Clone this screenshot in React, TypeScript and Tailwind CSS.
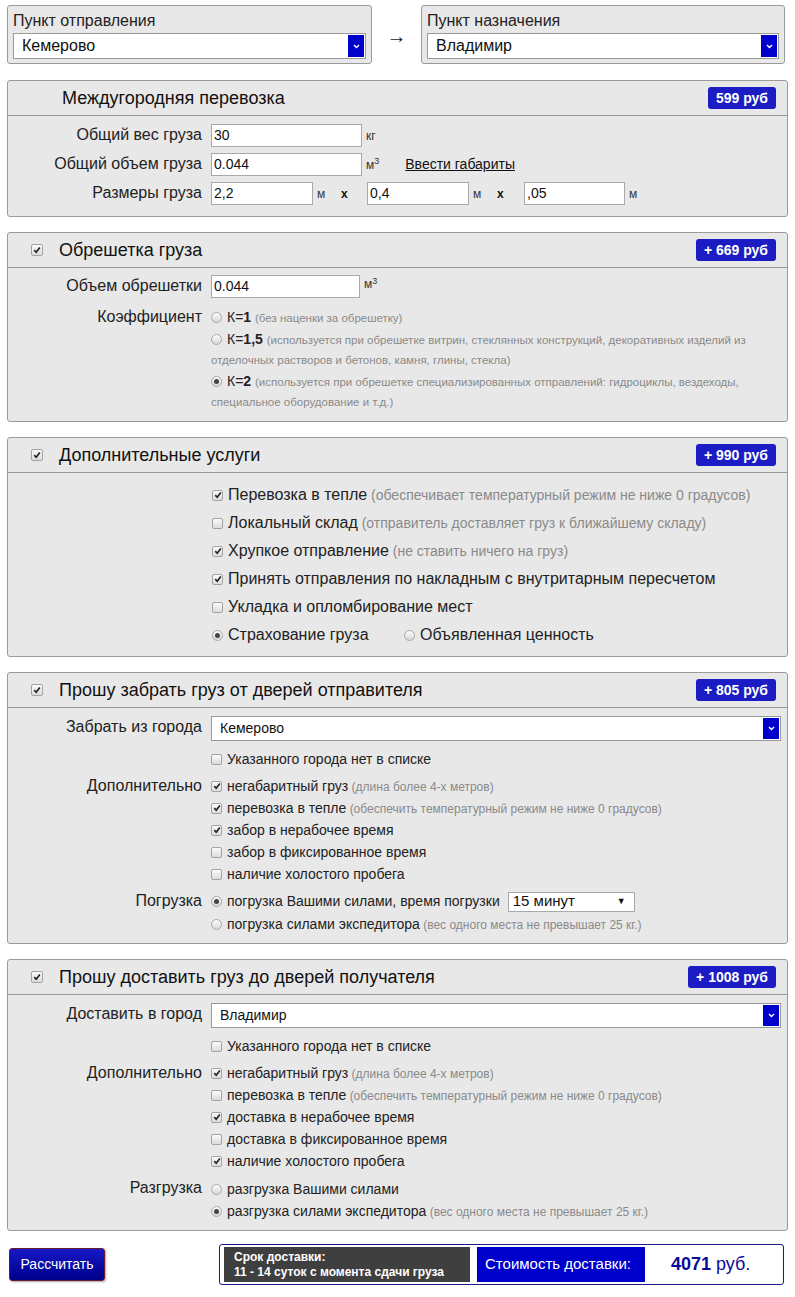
import React from 'react';

function Check({ on, big }: { on?: boolean; big?: boolean }) {
  return (
    <span
      className={
        'inline-flex shrink-0 items-center justify-center rounded-[2px] border border-[#a3a3a3] bg-linear-to-b from-[#fbfbfb] to-[#dcdcdc] align-middle ' +
        (big ? 'h-[12px] w-[12px]' : 'h-[11px] w-[11px]')
      }
    >
      {on && (
        <svg width="8" height="8" viewBox="0 0 9 9">
          <path d="M1.4 4.7 L3.6 7 L7.7 1.6" fill="none" stroke="#222" strokeWidth="1.9" />
        </svg>
      )}
    </span>
  );
}

function Radio({ on }: { on?: boolean }) {
  return (
    <span className="inline-flex h-[11px] w-[11px] shrink-0 items-center justify-center rounded-full border border-[#a8a8a8] bg-linear-to-b from-[#fbfbfb] to-[#d8d8d8] align-middle">
      {on && <span className="h-[5px] w-[5px] rounded-full bg-[#444]" />}
    </span>
  );
}

function Chevron() {
  return (
    <svg width="7" height="5" viewBox="0 0 7 5">
      <path d="M1 1 L3.5 3.5 L6 1" fill="none" stroke="#fff" strokeWidth="1.4" />
    </svg>
  );
}

function CitySelect({ value, tall }: { value: string; tall?: boolean }) {
  return (
    <div
      className={
        'flex items-stretch border border-[#9a9a9a] bg-white ' + (tall ? 'h-[26px] text-[16px]' : 'h-[25px] text-[14px]')
      }
    >
      <span className="flex flex-1 items-center pl-[8px] text-[#111]">{value}</span>
      <span className="m-px flex w-[16px] items-center justify-center bg-[#0000cc]">
        <Chevron />
      </span>
    </div>
  );
}

function Badge({ children }: { children: React.ReactNode }) {
  return (
    <span className="ml-auto flex h-[22px] items-center rounded-[3px] bg-[#1c1cc4] px-[8px] text-[14px] font-bold text-white">
      {children}
    </span>
  );
}

function Panel({
  title,
  badge,
  checkbox,
  children,
}: {
  title: string;
  badge: string;
  checkbox?: boolean;
  children: React.ReactNode;
}) {
  return (
    <div className="mx-[7px] rounded-[3px] border border-[#9a9a9a] bg-[#e8e8e8]">
      <div className={'flex h-[35px] items-center border-b border-[#9a9a9a] pr-[11px] ' + (checkbox ? 'pl-[23px]' : 'pl-[54px]')}>
        {checkbox && <Check on big />}
        <span className={'text-[18px] text-[#111] ' + (checkbox ? 'ml-[16px]' : '')}>{title}</span>
        <Badge>{badge}</Badge>
      </div>
      {children}
    </div>
  );
}

function TextInput({ value, w }: { value: string; w: string }) {
  return (
    <span className={'flex h-[23px] items-center border border-[#a9a9a9] bg-white pl-[2px] text-[14px] text-[#111] ' + w}>
      {value}
    </span>
  );
}

function Label({ children }: { children: React.ReactNode }) {
  return <div className="h-[22px] text-right text-[16px] leading-[22px] text-[#222]">{children}</div>;
}

function Item({ on, radio, text, note }: { on?: boolean; radio?: boolean; text: string; note?: string }) {
  return (
    <div className="flex h-[22px] items-center gap-[5px] text-[14px] text-[#222]">
      {radio ? <Radio on={on} /> : <Check on={on} />}
      <span className="leading-[22px]">
        {text}
        {note && <span className="text-[12px] leading-[12px] text-[#8a8a8a]"> {note}</span>}
      </span>
    </div>
  );
}

function Koef({ on, k, note }: { on?: boolean; k: string; note: string }) {
  return (
    <div>
      <span className="mr-[5px] inline-flex h-[20px] items-center align-top">
        <Radio on={on} />
      </span>
      <span>
        К=<b>{k}</b>
      </span>{' '}
      <span className="text-[11.5px] leading-[12px] text-[#8a8a8a]">{note}</span>
    </div>
  );
}

function DoorPanel({
  title,
  badge,
  cityLabel,
  city,
  items,
  loadLabel,
  loads,
}: {
  title: string;
  badge: string;
  cityLabel: string;
  city: string;
  items: { on: boolean; text: string; note?: string }[];
  loadLabel: string;
  loads: React.ReactNode[];
}) {
  return (
    <Panel checkbox title={title} badge={badge}>
      <div className="grid grid-cols-[194px_1fr] gap-x-[9px] pb-[8px] pr-[6px] pt-[8px]">
        <Label>{cityLabel}</Label>
        <CitySelect value={city} />
        <div />
        <div className="mt-[7px]">
          <Item text="Указанного города нет в списке" />
        </div>
        <div className="mt-[5px]">
          <Label>Дополнительно</Label>
        </div>
        <div className="mt-[5px]">
          {items.map((it) => (
            <Item key={it.text} on={it.on} text={it.text} note={it.note} />
          ))}
        </div>
        <div className="mt-[5px]">
          <Label>{loadLabel}</Label>
        </div>
        <div className="mt-[5px]">{loads}</div>
      </div>
    </Panel>
  );
}

export default function App() {
  return (
    <div className="min-h-[1297px] w-[795px] bg-white pt-[5px] font-['Liberation_Sans',Arial,sans-serif]">
      {/* route */}
      <div className="mx-[7px] flex items-start">
        <div className="w-[365px] rounded-[3px] border border-[#9a9a9a] bg-[#e8e8e8] px-[5px] pb-[4px] pt-[6px]">
          <div className="text-[16px] leading-[18px] text-[#222]">Пункт отправления</div>
          <div className="mt-[3px]">
            <CitySelect value="Кемерово" tall />
          </div>
        </div>
        <span className="mt-[20px] w-[49px] text-center text-[20px] leading-[22px] text-[#222]">→</span>
        <div className="w-[364px] rounded-[3px] border border-[#9a9a9a] bg-[#e8e8e8] px-[5px] pb-[4px] pt-[6px]">
          <div className="text-[16px] leading-[18px] text-[#222]">Пункт назначения</div>
          <div className="mt-[3px]">
            <CitySelect value="Владимир" tall />
          </div>
        </div>
      </div>

      <div className="mt-[16px] flex flex-col gap-[15px]">
        {/* intercity */}
        <Panel title="Междугородняя перевозка" badge="599 руб">
          <div className="grid grid-cols-[194px_1fr] gap-x-[9px] gap-y-[6px] pb-[11px] pt-[8px]">
            <Label>Общий вес груза</Label>
            <div className="flex items-center">
              <TextInput value="30" w="w-[151px]" />
              <span className="ml-[4px] text-[12px] text-[#333]">кг</span>
            </div>
            <Label>Общий объем груза</Label>
            <div className="flex items-center">
              <TextInput value="0.044" w="w-[151px]" />
              <span className="ml-[4px] text-[12px] text-[#333]">
                м<sup className="text-[9px]">3</sup>
              </span>
              <span className="ml-[26px] text-[14px] text-[#111] underline">Ввести габариты</span>
            </div>
            <Label>Размеры груза</Label>
            <div className="flex items-center text-[12px] text-[#333]">
              <TextInput value="2,2" w="w-[102px]" />
              <span className="ml-[4px] w-[24px]">м</span>
              <span className="w-[26px] font-bold text-[#111]">x</span>
              <TextInput value="0,4" w="w-[102px]" />
              <span className="ml-[4px] w-[24px]">м</span>
              <span className="w-[27px] font-bold text-[#111]">x</span>
              <TextInput value=",05" w="w-[101px]" />
              <span className="ml-[4px]">м</span>
            </div>
          </div>
        </Panel>

        {/* crating */}
        <Panel checkbox title="Обрешетка груза" badge="+ 669 руб">
          <div className="grid grid-cols-[194px_1fr] gap-x-[9px] pb-[10px] pr-[10px] pt-[7px]">
            <Label>Объем обрешетки</Label>
            <div className="flex items-center">
              <TextInput value="0.044" w="w-[149px]" />
              <span className="ml-[4px] self-start text-[12px] text-[#333]">
                м<sup className="text-[9px]">3</sup>
              </span>
            </div>
            <div className="mt-[9px]">
              <div className="text-right text-[16px] leading-[20px] text-[#222]">Коэффициент</div>
            </div>
            <div className="mt-[9px] flex flex-col gap-[2px] text-[14px] leading-[20px] text-[#222]">
              <Koef k="1" note="(без наценки за обрешетку)" />
              <Koef
                k="1,5"
                note="(используется при обрешетке витрин, стеклянных конструкций, декоративных изделий из отделочных растворов и бетонов, камня, глины, стекла)"
              />
              <Koef
                on
                k="2"
                note="(используется при обрешетке специализированных отправлений: гидроциклы, вездеходы, специальное оборудование и т.д.)"
              />
            </div>
          </div>
        </Panel>

        {/* extra services */}
        <Panel checkbox title="Дополнительные услуги" badge="+ 990 руб">
          <div className="pb-[7px] pl-[204px] pt-[8px] text-[16px] leading-[28px] text-[#222]">
            {[
              { on: true, t: 'Перевозка в тепле', n: '(обеспечивает температурный режим не ниже 0 градусов)' },
              { on: false, t: 'Локальный склад', n: '(отправитель доставляет груз к ближайшему складу)' },
              { on: true, t: 'Хрупкое отправление', n: '(не ставить ничего на груз)' },
              { on: true, t: 'Принять отправления по накладным с внутритарным пересчетом' },
              { on: false, t: 'Укладка и опломбирование мест' },
            ].map((r) => (
              <div key={r.t} className="flex h-[28px] items-center gap-[5px]">
                <Check on={r.on} />
                <span>
                  {r.t}
                  {r.n && <span className="text-[14px] leading-[14px] text-[#8a8a8a]"> {r.n}</span>}
                </span>
              </div>
            ))}
            <div className="flex h-[28px] items-center">
              <span className="flex w-[192px] items-center gap-[5px]">
                <Radio on /> Страхование груза
              </span>
              <span className="flex items-center gap-[5px]">
                <Radio /> Объявленная ценность
              </span>
            </div>
          </div>
        </Panel>

        <DoorPanel
          title="Прошу забрать груз от дверей отправителя"
          badge="+ 805 руб"
          cityLabel="Забрать из города"
          city="Кемерово"
          loadLabel="Погрузка"
          items={[
            { on: true, text: 'негабаритный груз', note: '(длина более 4-х метров)' },
            { on: true, text: 'перевозка в тепле', note: '(обеспечить температурный режим не ниже 0 градусов)' },
            { on: true, text: 'забор в нерабочее время' },
            { on: false, text: 'забор в фиксированное время' },
            { on: false, text: 'наличие холостого пробега' },
          ]}
          loads={[
            <div key="a" className="flex h-[23px] items-center gap-[5px] text-[14px] text-[#222]">
              <Radio on />
              <span>погрузка Вашими силами, время погрузки</span>
              <span className="ml-[3px] flex h-[20px] w-[127px] items-center justify-between border border-[#a9a9a9] bg-white pl-[4px] pr-[8px] text-[15px] text-[#111]">
                15 минут <span className="text-[9px]">▼</span>
              </span>
            </div>,
            <Item key="b" radio text="погрузка силами экспедитора" note="(вес одного места не превышает 25 кг.)" />,
          ]}
        />

        <DoorPanel
          title="Прошу доставить груз до дверей получателя"
          badge="+ 1008 руб"
          cityLabel="Доставить в город"
          city="Владимир"
          loadLabel="Разгрузка"
          items={[
            { on: true, text: 'негабаритный груз', note: '(длина более 4-х метров)' },
            { on: false, text: 'перевозка в тепле', note: '(обеспечить температурный режим не ниже 0 градусов)' },
            { on: true, text: 'доставка в нерабочее время' },
            { on: false, text: 'доставка в фиксированное время' },
            { on: true, text: 'наличие холостого пробега' },
          ]}
          loads={[
            <div key="a" className="h-[23px] pt-[1px]">
              <Item radio text="разгрузка Вашими силами" />
            </div>,
            <Item key="b" radio on text="разгрузка силами экспедитора" note="(вес одного места не превышает 25 кг.)" />,
          ]}
        />
      </div>

      {/* footer */}
      <div className="mt-[13px] flex items-center pl-[9px]">
        <button className="h-[33px] w-[96px] rounded-[3px] border border-[#6b1a2a] bg-linear-to-b from-[#1818c8] to-[#00008a] text-[14px] text-white shadow-[1px_1px_2px_rgba(0,0,0,0.35)]">
          Рассчитать
        </button>
        <div className="ml-[114px] flex h-[41px] w-[565px] items-center gap-[7px] rounded-[3px] border border-[#1a1a80] bg-white px-[4px]">
          <div className="flex h-[35px] w-[246px] flex-col justify-center bg-[#3f3f3f] pl-[10px] text-[12px] leading-[15px] text-white">
            <span className="font-semibold">Срок доставки:</span>
            <span className="font-bold">11 - 14 суток с момента сдачи груза</span>
          </div>
          <div className="flex h-[35px] w-[168px] items-center bg-[#0000cc] pl-[8px] text-[15px] text-white">Стоимость доставки:</div>
          <div className="ml-[19px] text-[18px] text-[#0a0a99]">
            <b>4071</b> руб.
          </div>
        </div>
      </div>
    </div>
  );
}
